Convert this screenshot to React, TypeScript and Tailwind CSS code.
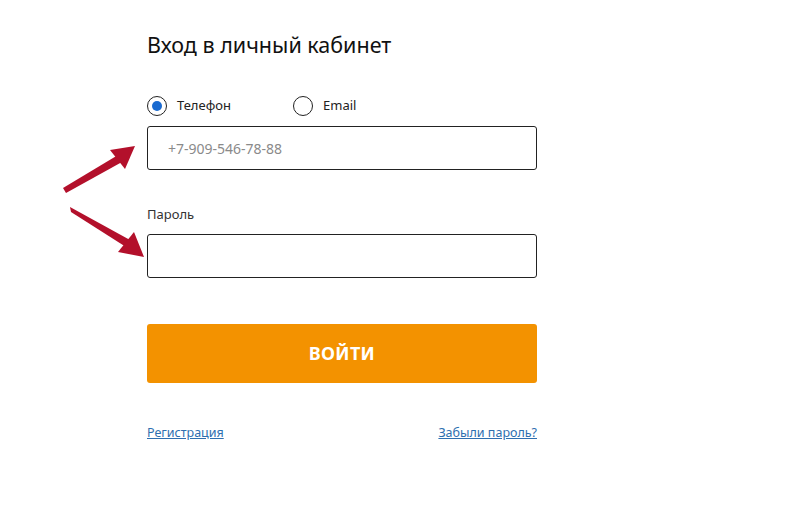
import React from "react";

export default function App() {
  return (
    <div className="relative w-[805px] h-[509px] bg-white overflow-hidden" style={{ fontFamily: '"Noto Sans", "Open Sans", sans-serif' }}>
      <div className="pl-[147px] pt-[31px] w-[537px] flex flex-col">
        <h1 className="text-[21.5px] leading-[28px] text-[#111] font-normal">Вход в личный кабинет</h1>
        <div className="mt-[37px] flex items-center h-[20px]">
          <label className="flex items-center gap-[10px] w-[146px]">
            <span className="w-[20px] h-[20px] rounded-full border-[1.5px] border-[#222] flex items-center justify-center">
              <span className="w-[10px] h-[10px] rounded-full bg-[#1a6ad0]" />
            </span>
            <span className="text-[13px] text-[#222]">Телефон</span>
          </label>
          <label className="flex items-center gap-[10px]">
            <span className="w-[20px] h-[20px] rounded-full border-[1.5px] border-[#222]" />
            <span className="text-[13px] text-[#222]">Email</span>
          </label>
        </div>
        <div className="mt-[10px] h-[44px] w-[390px] border border-[#222] rounded-[3px] flex items-center pl-[20px]">
          <span className="text-[14px] text-[#8a8a8a]">+7-909-546-78-88</span>
        </div>
        <div className="mt-[36px] text-[13px] leading-[16px] text-[#333]">Пароль</div>
        <div className="mt-[12px] h-[44px] w-[390px] border border-[#222] rounded-[3px]" />
        <button className="mt-[46px] h-[59px] w-[390px] rounded-[3px] bg-[#f39200] text-white font-bold text-[18px] tracking-[0.3px]">ВОЙТИ</button>
        <div className="mt-[42px] w-[390px] flex justify-between text-[12.5px] leading-[16px] text-[#2e6fb0]">
          <a className="underline">Регистрация</a>
          <a className="underline">Забыли пароль?</a>
        </div>
      </div>
      <svg className="absolute left-0 top-0" width="805" height="509" viewBox="0 0 805 509">
        <g fill="#b3102b">
          <polygon points="63,188 66,193 122,162 118,155" />
          <polygon points="135,146 110,150 125,169" />
          <polygon points="70,207 71,212 126,247 130,240" />
          <polygon points="144,257 134,232 118,252" />
        </g>
      </svg>
    </div>
  );
}
